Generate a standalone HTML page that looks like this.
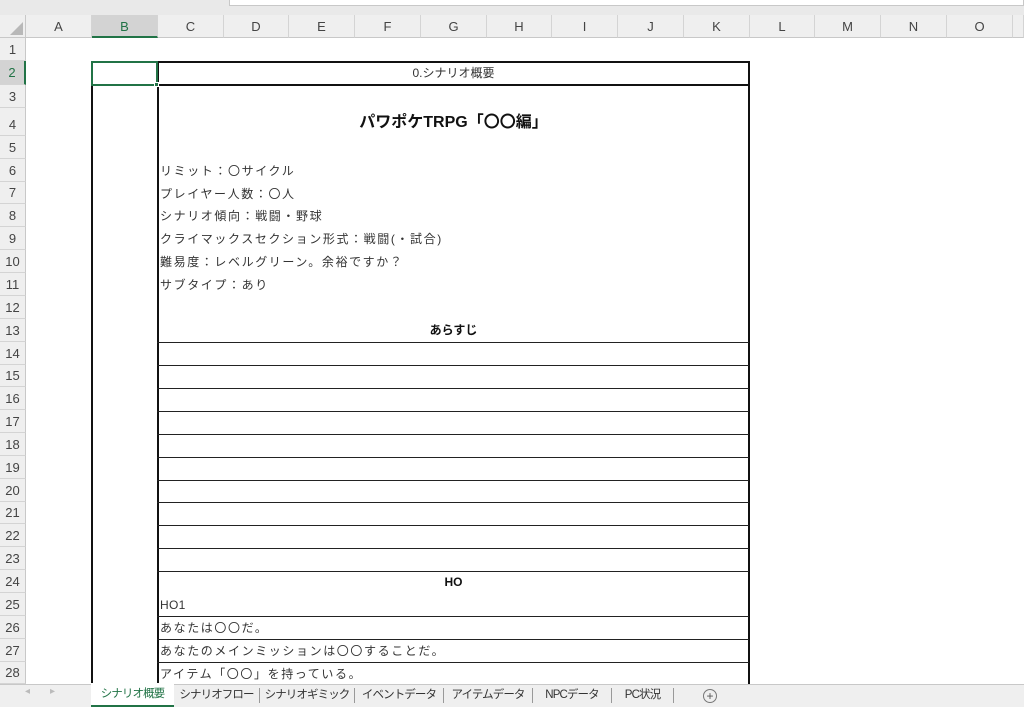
<!DOCTYPE html>
<html><head><meta charset="utf-8"><style>
*{margin:0;padding:0;box-sizing:border-box}
body{width:1024px;height:707px;overflow:hidden;background:#fff;position:relative;font-family:"Liberation Sans","Noto Sans CJK JP",sans-serif;color:#222}
.a{position:absolute}
.ch{position:absolute;top:15px;height:23px;line-height:23px;text-align:center;font-size:13px;color:#444;border-right:1px solid #d4d4d4;background:#efefef;border-bottom:1px solid #c8c8c8}
.rh{position:absolute;left:0;width:26px;text-align:center;font-size:13px;color:#444;background:#efefef;border-bottom:1px solid #d4d4d4;border-right:1px solid #c8c8c8;display:flex;align-items:center;justify-content:center}
.t{position:absolute;left:160px;font-size:12px;letter-spacing:1.6px;display:flex;align-items:center;white-space:nowrap;color:#333}
.hl{position:absolute;left:157px;width:592px;height:1px;background:#222}
.tab{position:absolute;top:684px;height:23px;line-height:22px;font-size:11.5px;letter-spacing:-0.9px;color:#333;text-align:center;white-space:nowrap;overflow:hidden}
.sep{position:absolute;top:688px;width:1px;height:15px;background:#999}
</style></head><body>
<div class="a" style="left:0;top:0;width:1024px;height:15px;background:#e9e9e9"></div>
<div class="a" style="left:229px;top:0;width:795px;height:6px;background:#fff;border:1px solid #c8c8c8;border-top:none"></div>
<div class="a" style="left:0;top:15px;width:26px;height:23px;background:#efefef;border-right:1px solid #c8c8c8;border-bottom:1px solid #c8c8c8"></div>
<div class="a" style="left:10px;top:22px;width:0;height:0;border-left:13px solid transparent;border-bottom:13px solid #b8b8b8"></div>
<div class="ch" style="left:26px;width:66px">A</div>
<div class="ch" style="left:92px;width:66px;background:#d3d3d3;color:#217346;border-bottom:2px solid #217346">B</div>
<div class="ch" style="left:158px;width:66px">C</div>
<div class="ch" style="left:224px;width:65px">D</div>
<div class="ch" style="left:289px;width:66px">E</div>
<div class="ch" style="left:355px;width:66px">F</div>
<div class="ch" style="left:421px;width:66px">G</div>
<div class="ch" style="left:487px;width:65px">H</div>
<div class="ch" style="left:552px;width:66px">I</div>
<div class="ch" style="left:618px;width:66px">J</div>
<div class="ch" style="left:684px;width:66px">K</div>
<div class="ch" style="left:750px;width:65px">L</div>
<div class="ch" style="left:815px;width:66px">M</div>
<div class="ch" style="left:881px;width:66px">N</div>
<div class="ch" style="left:947px;width:66px">O</div>
<div class="ch" style="left:1013px;width:11px"></div>

<div class="rh" style="top:38px;height:23px">1</div>
<div class="rh" style="top:61px;height:24px;background:#d3d3d3;color:#217346;border-right:2px solid #217346">2</div>
<div class="rh" style="top:85px;height:23px">3</div>
<div class="rh" style="top:108px;height:28px;padding-top:6px">4</div>
<div class="rh" style="top:136px;height:23px">5</div>
<div class="rh" style="top:159px;height:23px">6</div>
<div class="rh" style="top:182px;height:22px">7</div>
<div class="rh" style="top:204px;height:23px">8</div>
<div class="rh" style="top:227px;height:23px">9</div>
<div class="rh" style="top:250px;height:23px">10</div>
<div class="rh" style="top:273px;height:23px">11</div>
<div class="rh" style="top:296px;height:23px">12</div>
<div class="rh" style="top:319px;height:23px">13</div>
<div class="rh" style="top:342px;height:23px">14</div>
<div class="rh" style="top:365px;height:22px">15</div>
<div class="rh" style="top:387px;height:23px">16</div>
<div class="rh" style="top:410px;height:23px">17</div>
<div class="rh" style="top:433px;height:23px">18</div>
<div class="rh" style="top:456px;height:23px">19</div>
<div class="rh" style="top:479px;height:23px">20</div>
<div class="rh" style="top:502px;height:22px">21</div>
<div class="rh" style="top:524px;height:23px">22</div>
<div class="rh" style="top:547px;height:23px">23</div>
<div class="rh" style="top:570px;height:23px">24</div>
<div class="rh" style="top:593px;height:23px">25</div>
<div class="rh" style="top:616px;height:23px">26</div>
<div class="rh" style="top:639px;height:23px">27</div>
<div class="rh" style="top:662px;height:22px">28</div>

<div class="a" style="left:157px;top:61px;width:593px;height:2px;background:#111"></div>
<div class="a" style="left:748px;top:61px;width:2px;height:623px;background:#111"></div>
<div class="a" style="left:157px;top:61px;width:2px;height:623px;background:#111"></div>
<div class="a" style="left:157px;top:84px;width:593px;height:2px;background:#111"></div>
<div class="a" style="left:91px;top:84px;width:2px;height:600px;background:#111"></div>
<div class="a" style="left:91px;top:84px;width:67px;height:2px;background:#111"></div>
<div class="a" style="left:91px;top:61px;width:67px;height:25px;border:2px solid #217346"></div>
<div class="a" style="left:154px;top:82px;width:5px;height:5px;background:#217346;border:1px solid #fff"></div>

<div class="a" style="left:159px;top:63px;width:589px;height:21px;line-height:21px;text-align:center;font-size:12px;color:#333">0.シナリオ概要</div>
<div class="a" style="left:159px;top:108px;width:589px;height:28px;line-height:30px;text-align:center;font-size:16px;font-weight:bold;color:#111">パワポケTRPG「〇〇編」</div>

<div class="t" style="top:159px;height:23px">リミット：〇サイクル</div>
<div class="t" style="top:182px;height:22px">プレイヤー人数：〇人</div>
<div class="t" style="top:204px;height:23px">シナリオ傾向：戦闘・野球</div>
<div class="t" style="top:227px;height:23px">クライマックスセクション形式：戦闘(・試合)</div>
<div class="t" style="top:250px;height:23px">難易度：レベルグリーン。余裕ですか？</div>
<div class="t" style="top:273px;height:23px">サブタイプ：あり</div>
<div class="a" style="left:159px;top:319px;width:589px;height:23px;line-height:23px;text-align:center;font-size:12px;font-weight:bold;color:#111">あらすじ</div>

<div class="hl" style="top:342px"></div>
<div class="hl" style="top:365px"></div>
<div class="hl" style="top:388px"></div>
<div class="hl" style="top:411px"></div>
<div class="hl" style="top:434px"></div>
<div class="hl" style="top:457px"></div>
<div class="hl" style="top:480px"></div>
<div class="hl" style="top:502px"></div>
<div class="hl" style="top:525px"></div>
<div class="hl" style="top:548px"></div>
<div class="hl" style="top:571px"></div>
<div class="hl" style="top:616px"></div>
<div class="hl" style="top:639px"></div>
<div class="hl" style="top:662px"></div>

<div class="a" style="left:159px;top:571px;width:589px;height:22px;line-height:22px;text-align:center;font-size:12px;font-weight:bold;color:#111">HO</div>
<div class="t" style="top:593px;height:23px;letter-spacing:0.3px">HO1</div>
<div class="t" style="top:616px;height:23px">あなたは〇〇だ。</div>
<div class="t" style="top:639px;height:23px">あなたのメインミッションは〇〇することだ。</div>
<div class="t" style="top:662px;height:22px">アイテム「〇〇」を持っている。</div>

<div class="a" style="left:0;top:684px;width:1024px;height:23px;background:#efefef;border-top:1px solid #c8c8c8"></div>
<div class="a" style="left:25px;top:686px;font-size:10px;color:#bbb">◂</div>
<div class="a" style="left:50px;top:686px;font-size:10px;color:#bbb">▸</div>
<div class="tab" style="left:91px;width:83px;background:#fff;color:#217346;border-bottom:2px solid #217346;top:683px;height:24px">シナリオ概要</div>
<div class="tab" style="left:174px;width:85px">シナリオフロー</div>
<div class="sep" style="left:259px"></div>
<div class="tab" style="left:260px;width:94px">シナリオギミック</div>
<div class="sep" style="left:354px"></div>
<div class="tab" style="left:355px;width:88px">イベントデータ</div>
<div class="sep" style="left:443px"></div>
<div class="tab" style="left:444px;width:88px">アイテムデータ</div>
<div class="sep" style="left:532px"></div>
<div class="tab" style="left:533px;width:78px">NPCデータ</div>
<div class="sep" style="left:611px"></div>
<div class="tab" style="left:612px;width:61px">PC状況</div>
<div class="sep" style="left:673px"></div>
<div class="a" style="left:703px;top:689px;width:14px;height:14px;border:1px solid #777;border-radius:50%;font-size:12px;line-height:12px;text-align:center;color:#555">+</div>
</body></html>
